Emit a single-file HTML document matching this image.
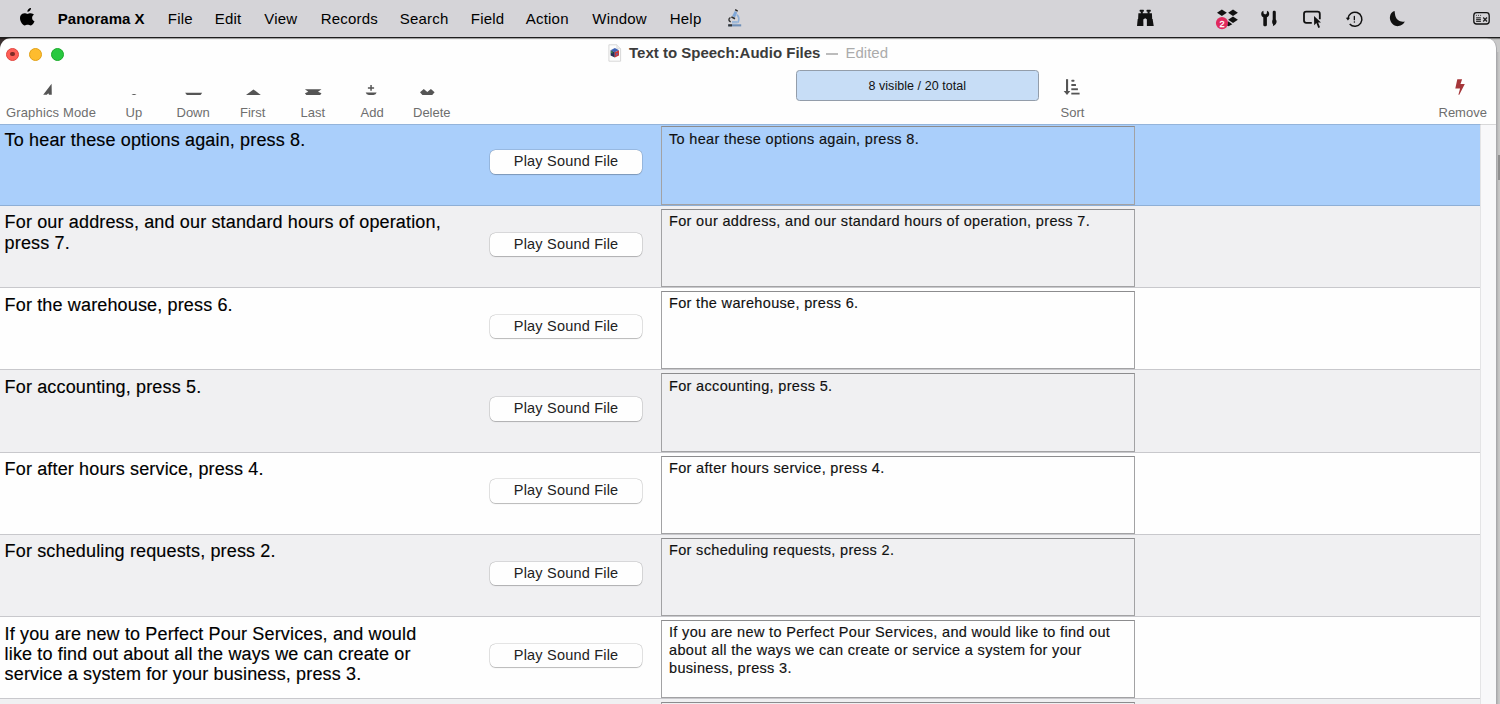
<!DOCTYPE html>
<html><head><meta charset="utf-8"><style>
*{margin:0;padding:0;box-sizing:border-box}
html,body{width:1500px;height:704px;overflow:hidden;background:linear-gradient(90deg,#b0b0b2 1497px,#bdbdbd 1498px,#c8c8c8 1499px);font-family:"Liberation Sans", sans-serif}
.t{position:absolute;white-space:nowrap}
#menubar{position:absolute;left:0;top:0;width:1500px;height:38px;background:#d5d4d8;border-bottom:1.5px solid #1e1e1e}
#win{position:absolute;left:0;top:38px;width:1496.5px;height:700px;background:#fefefe;border-top-left-radius:11px;border-top-right-radius:10px;border-right:1px solid #a9a9ac}
.tl{position:absolute;width:13px;height:13px;border-radius:50%;border:0.5px solid}
#status{position:absolute;left:795.5px;top:69.8px;width:243.5px;height:31.2px;background:#c7ddf6;border:1px solid #939daa;border-radius:3.5px;
  font-size:12.5px;line-height:29.2px;padding-top:1.2px;text-align:center;color:#111;letter-spacing:0.05px}
.row{position:absolute;left:0;width:1480px;border-top:1px solid #c8c8cc}
.row.sel{background:#aacffb;border-top:none;border-bottom:1px solid #8eafd6}
.row.g{background:#f0f0f2;border-top-color:#8eafd6}
.row.g~.row.g{border-top-color:#c8c8cc}
.row.w{background:#fefefe}
.box{position:absolute;left:661px;width:474px;border:1px solid #a2a2a4;border-top-color:#8c8c8e}
.btn{position:absolute;left:489.8px;width:152.6px;height:23.5px;background:#fefefe;border-radius:5.5px;
  box-shadow:0 0 0 0.6px rgba(0,0,0,0.17),0 0.8px 1px rgba(0,0,0,0.2);font-size:14.5px;line-height:22px;text-align:center;color:#222;letter-spacing:0.2px}
#sb{position:absolute;left:1480px;top:124px;width:16px;height:580px;background:#f8f8fa;border-left:1px solid #e4e4e6}
#tbline{position:absolute;left:0;top:123.5px;width:1496px;height:1px;background:rgba(0,0,0,0.13)}
</style></head>
<body>
<div id="menubar"></div>
<svg style="position:absolute;left:19.6px;top:8.4px" width="16.2" height="17.8" viewBox="0 0 170 200" preserveAspectRatio="none">
<path fill="#000" d="M150.4 155.6c-2.8 6.4-6.1 12.4-9.9 17.8-5.2 7.4-9.5 12.6-12.7 15.4-5.1 4.7-10.5 7.1-16.3 7.2-4.2 0-9.2-1.2-15-3.6-5.8-2.4-11.2-3.5-16.1-3.5-5.1 0-10.6 1.2-16.5 3.5-5.9 2.4-10.7 3.6-14.3 3.7-5.5.2-11-2.2-16.5-7.3-3.5-3.1-7.9-8.4-13.2-15.9-5.7-8-10.3-17.2-14-27.7C1.9 134.9 0 123.9 0 113.3c0-12.2 2.6-22.6 7.9-31.4 4.1-7 9.6-12.6 16.5-16.7 6.9-4.1 14.3-6.2 22.3-6.3 4.4 0 10.1 1.4 17.2 4 7.1 2.7 11.6 4 13.6 4 1.5 0 6.5-1.6 15.1-4.7 8.1-2.9 14.9-4.1 20.5-3.6 15.2 1.2 26.6 7.2 34.2 18-13.6 8.2-20.3 19.8-20.2 34.6.1 11.5 4.3 21.1 12.5 28.7 3.7 3.5 7.9 6.2 12.5 8.2-1 2.9-2.1 5.7-3.2 8.4zM115.5 3.6c0 9.1-3.3 17.5-9.9 25.3-8 9.3-17.6 14.7-28.1 13.9-.1-1.1-.2-2.2-.2-3.4 0-8.7 3.8-18 10.5-25.6 3.4-3.8 7.6-7 12.7-9.6C105.6 1.7 110.4.3 114.9 0c.1 1.2.6 2.4.6 3.6z"/></svg>
<div class="t" style="left:57.8px;top:9.83px;font-size:15px;line-height:18.75px;font-weight:700;color:#000;letter-spacing:0px;">Panorama X</div>
<div class="t" style="left:167.8px;top:9.83px;font-size:15px;line-height:18.75px;font-weight:400;color:#000;letter-spacing:0.2px;">File</div>
<div class="t" style="left:214.8px;top:9.83px;font-size:15px;line-height:18.75px;font-weight:400;color:#000;letter-spacing:0.2px;">Edit</div>
<div class="t" style="left:264.3px;top:9.83px;font-size:15px;line-height:18.75px;font-weight:400;color:#000;letter-spacing:0.2px;">View</div>
<div class="t" style="left:320.8px;top:9.83px;font-size:15px;line-height:18.75px;font-weight:400;color:#000;letter-spacing:0.2px;">Records</div>
<div class="t" style="left:399.8px;top:9.83px;font-size:15px;line-height:18.75px;font-weight:400;color:#000;letter-spacing:0.2px;">Search</div>
<div class="t" style="left:470.8px;top:9.83px;font-size:15px;line-height:18.75px;font-weight:400;color:#000;letter-spacing:0.2px;">Field</div>
<div class="t" style="left:525.8px;top:9.83px;font-size:15px;line-height:18.75px;font-weight:400;color:#000;letter-spacing:0.2px;">Action</div>
<div class="t" style="left:592.3px;top:9.83px;font-size:15px;line-height:18.75px;font-weight:400;color:#000;letter-spacing:0.2px;">Window</div>
<div class="t" style="left:669.8px;top:9.83px;font-size:15px;line-height:18.75px;font-weight:400;color:#000;letter-spacing:0.2px;">Help</div>
<svg style="position:absolute;left:0;top:0" width="1500" height="37" viewBox="0 0 1500 37">
<g fill="#111">
<rect x="1139.6" y="9.7" width="4.3" height="2" rx="0.6"/><rect x="1146.5" y="9.7" width="4.3" height="2" rx="0.6"/>
<rect x="1140.8" y="11.2" width="2" height="2.6"/><rect x="1147.6" y="11.2" width="2" height="2.6"/>
<path d="M1138.4 13.3 H1151.9 L1152.2 19.2 H1146.8 L1145.2 18.2 L1143.6 19.2 H1138.1Z"/>
<path d="M1137.7 18.9 H1143.3 L1143.4 25.9 H1137Z"/><path d="M1146.9 18.9 H1152.6 L1153.7 25.9 H1146.9Z"/>
</g>
<g fill="#111">
<path d="M1217 12.8 L1221.9 9.6 L1226.8 12.8 L1221.9 16Z"/>
<path d="M1228.1 12.8 L1233 9.6 L1237.9 12.8 L1233 16Z"/>
<path d="M1228.1 19.8 L1233 16.6 L1237.9 19.8 L1233 23Z"/>
<path d="M1226 22.5 L1228.5 21.6 L1232.3 24.2 L1228.5 26.2 L1226 25Z"/>
</g>
<circle cx="1222" cy="23.1" r="6.1" fill="#e02a5e"/>
<text x="1222.1" y="26.5" font-family="Liberation Sans" font-size="9.2" font-weight="400" fill="#fff" stroke="#fff" stroke-width="0.3" text-anchor="middle">2</text>
<g fill="#111">
<path d="M1261.2 14 C1261.2 12.3 1262.2 11.1 1263.4 10.8 L1263.6 13.6 L1265.2 14.4 L1266.8 13.6 L1267 10.8 C1268.2 11.1 1269.2 12.3 1269.2 14 C1269.2 15.6 1268.3 16.8 1266.9 17.3 V25 C1266.9 25.9 1266.1 26.2 1265.1 26.2 C1264.1 26.2 1263.3 25.9 1263.3 25 V17.3 C1261.9 16.8 1261.2 15.6 1261.2 14Z"/>
<path d="M1272.7 12.3 C1272.7 11.2 1273.4 10.8 1274.25 10.8 C1275.1 10.8 1275.8 11.2 1275.8 12.3 V19.6 C1276.6 20.4 1276.8 21.6 1276.4 22.8 C1276 24.3 1274.6 25.6 1272.8 26.2 C1273.4 25.3 1273.2 24.6 1272.6 23.8 C1272 22.8 1272 20.6 1272.7 19.6Z"/>
</g>
<path d="M1311.8 22.85 H1306.2 C1304.9 22.85 1304 22 1304 20.6 V14 C1304 12.6 1304.9 11.7 1306.2 11.7 H1317.6 C1318.9 11.7 1319.8 12.6 1319.8 14 V19.2" fill="none" stroke="#111" stroke-width="1.8"/>
<path d="M1314 16 L1314.2 25.2 L1316.4 23.1 L1318.3 27.9 L1320 27.2 L1318.1 22.6 L1321 22.4 Z" fill="#111"/>
<path d="M1347.9 18.6 A7 7 0 1 1 1349.7 23.9" fill="none" stroke="#111" stroke-width="1.5"/>
<path d="M1345.8 17.8 H1350.1 L1347.9 20.6Z" fill="#111"/>
<rect x="1353.7" y="15.8" width="1.3" height="4.5" rx="0.6" fill="#111"/><circle cx="1354.35" cy="22" r="0.75" fill="#111"/>
<path d="M1394.6 11 C1390.2 12.2 1389.4 17 1390.2 20 C1391.2 24 1394.8 26.4 1398.4 26.1 C1401.4 25.9 1403.8 23.8 1404.8 21.5 C1400.3 22.6 1396.4 20 1395.3 15.8 C1394.9 14.2 1394.8 12.5 1394.6 11Z" fill="#111"/>
<rect x="1473.8" y="12.7" width="15.4" height="11.3" rx="2.8" fill="none" stroke="#111" stroke-width="1.3"/>
<g fill="#222"><circle cx="1476.4" cy="15.3" r="0.55"/><circle cx="1478.5" cy="15.3" r="0.55"/><circle cx="1480.6" cy="15.3" r="0.55"/>
<rect x="1476.1" y="17.3" width="4.8" height="1.1"/><rect x="1476.1" y="19.1" width="4.8" height="1.1"/><rect x="1476.1" y="20.8" width="4.8" height="1.1"/></g>
<path d="M1483.2 17.5 L1487 21.5 M1487 17.5 L1483.2 21.5" stroke="#222" stroke-width="1.25"/>
<g>
<path d="M735.5 9 L738 10.5 L737.3 11.8 L734.8 10.3Z" fill="#222"/>
<path d="M734.8 11 L737.2 12.4 L735 17.5 L732.2 16Z" fill="#7ea6d8"/>
<path d="M731.8 16.2 L735.4 18 L734.6 19.4 L731 17.6Z" fill="#2c2c2c"/>
<path d="M730 17 C727.5 18.5 727.8 21.5 730.5 22.5 L731 21.3 C729.3 20.6 729.2 18.9 730.8 18Z" fill="#333"/>
<path d="M737 14 C740 15.5 740.5 20 738.5 23 L737 22.5 C738.6 20 738.3 17 736.4 15.5Z" fill="#8fb0d8"/>
<rect x="732" y="21" width="5.5" height="2.5" fill="#9db8d8"/>
<path d="M728.2 24.3 H741.2 V26.4 H728.2Z" fill="#6e8fb8"/>
<path d="M728.2 24.3 H732 V26.4 H728.2Z" fill="#333"/>
</g>
</svg>
<div style="position:absolute;left:0;top:38px;width:14px;height:14px;background:#3a3030"></div><div style="position:absolute;left:1482px;top:38px;width:18px;height:14px;background:#c9c9c9"></div>
<div id="win"></div>
<div style="position:absolute;left:0;top:38px;width:1500px;height:1px;background:rgba(0,0,0,0.36)"></div><div style="position:absolute;left:0;top:39px;width:1500px;height:1px;background:rgba(0,0,0,0.05)"></div>
<div class="tl" style="left:6px;top:47.5px;background:#fe5f57;border-color:#e2463f"></div>
<div style="position:absolute;left:10.25px;top:51.75px;width:4.5px;height:4.5px;border-radius:50%;background:#7e2a25"></div>
<div class="tl" style="left:28.5px;top:47.5px;background:#febc2e;border-color:#e1a116"></div>
<div class="tl" style="left:51px;top:47.5px;background:#28c840;border-color:#1aab29"></div>
<svg style="position:absolute;left:600px;top:40px" width="30" height="26" viewBox="600 40 30 26">
<path d="M608.9 44.8 H616.8 L620.6 48.6 V61.2 H608.9Z" fill="#fdfdfd" stroke="#d2d2d2" stroke-width="0.9"/>
<path d="M616.8 44.8 V48.6 H620.6" fill="#eee" stroke="#d8d8d8" stroke-width="0.7"/>
<path d="M610.6 50.2 L614.8 48.1 L619 50.2 L614.8 52.3Z" fill="#3f63b5"/>
<path d="M610.6 50.2 L614.8 52.3 V57.6 L610.6 55.5Z" fill="#2b3158"/>
<path d="M614.8 52.3 L619 50.2 V55.5 L614.8 57.6Z" fill="#c93a3a"/>
<path d="M611 51 L612.5 51.7 V53.5 L611 52.8Z" fill="#3c9a4a"/>
<path d="M616.2 53.6 L617.6 52.9 V54.7 L616.2 55.4Z" fill="#4a6fd0"/>
</svg>
<div class="t" style="left:629px;top:43.93px;font-size:15px;line-height:18.75px;font-weight:700;color:#3b3b3b;letter-spacing:0px;">Text to Speech:Audio Files</div>
<div style="position:absolute;left:826px;top:53px;width:12.4px;height:2px;background:#bcbcbc"></div>
<div class="t" style="left:845.5px;top:43.93px;font-size:15px;line-height:18.75px;font-weight:400;color:#ababab;letter-spacing:0px;">Edited</div>
<div class="t" style="left:6px;top:105.17px;font-size:13px;line-height:16.25px;font-weight:400;color:#6e6e6e;letter-spacing:0.15px;">Graphics Mode</div>
<div class="t" style="left:125.5px;top:105.17px;font-size:13px;line-height:16.25px;font-weight:400;color:#6e6e6e;letter-spacing:0px;">Up</div>
<div class="t" style="left:176.5px;top:105.17px;font-size:13px;line-height:16.25px;font-weight:400;color:#6e6e6e;letter-spacing:0px;">Down</div>
<div class="t" style="left:240px;top:105.17px;font-size:13px;line-height:16.25px;font-weight:400;color:#6e6e6e;letter-spacing:0px;">First</div>
<div class="t" style="left:300.5px;top:105.17px;font-size:13px;line-height:16.25px;font-weight:400;color:#6e6e6e;letter-spacing:0px;">Last</div>
<div class="t" style="left:360.5px;top:105.17px;font-size:13px;line-height:16.25px;font-weight:400;color:#6e6e6e;letter-spacing:0px;">Add</div>
<div class="t" style="left:413px;top:105.17px;font-size:13px;line-height:16.25px;font-weight:400;color:#6e6e6e;letter-spacing:0px;">Delete</div>
<div class="t" style="left:1060.5px;top:105.17px;font-size:13px;line-height:16.25px;font-weight:400;color:#6e6e6e;letter-spacing:0px;">Sort</div>
<div class="t" style="left:1438.5px;top:105.17px;font-size:13px;line-height:16.25px;font-weight:400;color:#6e6e6e;letter-spacing:0px;">Remove</div>
<svg style="position:absolute;left:0;top:70px" width="1500" height="30" viewBox="0 70 1500 30">
<path fill="#555" d="M43.2 94.8 L51.6 83.8 L51.8 94.8 L49 94.8 L48.3 93.2 L46.8 94.8Z"/>
<path fill="#555" d="M131.5 95 Q134 92.8 136.5 95Z"/>
<path fill="#555" d="M185.1 92.8 H202.2 L200.6 94.9 H186.8Z"/>
<path fill="#555" d="M246 94.9 L253.4 89.4 L260.8 94.9Z"/>
<path fill="#555" d="M304.9 89.2 H321.5 L318 91.8 L321.5 93.3 L320.2 94.9 H306.3 L304.9 93.3 L308.3 91.8Z"/>
<path fill="#555" d="M370.3 84.9 h1.5 v2.3 h2.3 v1.5 h-2.3 v2.1 h-1.5 v-2.1 h-2.4 v-1.5 h2.4z"/>
<path fill="#555" d="M365.7 92.5 H376.6 Q376 94.6 373.5 95 H368.8 Q366.3 94.6 365.7 92.5Z"/>
<path fill="#555" d="M420 92.3 L423.8 89 L427.3 92 L430.9 89 L434.6 92.3 L432.2 95 H422.4Z"/>
<rect x="1066" y="79.2" width="2.1" height="13" fill="#555"/>
<path fill="#555" d="M1063.7 91.1 H1070.3 L1067 94.9Z"/>
<rect x="1071.3" y="79.8" width="3.2" height="2" rx="0.8" fill="#555"/>
<rect x="1071.3" y="84" width="4.7" height="2" rx="0.5" fill="#555"/>
<rect x="1071.3" y="88.3" width="6.6" height="1.9" fill="#555"/>
<rect x="1071.3" y="92.7" width="8.3" height="1.8" fill="#555"/>
<path fill="#a5363a" d="M1457.3 79.2 H1462.1 L1460.5 84.1 H1464.8 L1459.3 94.8 H1458.4 L1460.1 88.4 H1455.3Z"/>
</svg>
<div id="status">8 visible / 20 total</div>
<div class="row sel" style="top:124px;height:82px"></div>
<div class="box" style="top:126px;height:79px"></div>
<div class="t" style="left:4.6px;top:130.24px;font-size:18px;line-height:20.25px;font-weight:400;color:#000;letter-spacing:0.15px;-webkit-text-stroke:0.15px #000;">To hear these options again, press 8.</div>
<div class="t" style="left:669px;top:130.88px;font-size:14.5px;line-height:17.8px;font-weight:400;color:#111;letter-spacing:0.33px;-webkit-text-stroke:0.15px #111;">To hear these options again, press 8.</div>
<div class="btn" style="top:150.30px">Play Sound File</div>
<div class="row g" style="top:205px;height:83px"></div>
<div class="box" style="top:209px;height:78px"></div>
<div class="t" style="left:4.6px;top:212.49px;font-size:18px;line-height:20.25px;font-weight:400;color:#000;letter-spacing:0.15px;-webkit-text-stroke:0.15px #000;">For our address, and our standard hours of operation,<br>press 7.</div>
<div class="t" style="left:669px;top:213.13px;font-size:14.5px;line-height:17.8px;font-weight:400;color:#111;letter-spacing:0.33px;-webkit-text-stroke:0.15px #111;">For our address, and our standard hours of operation, press 7.</div>
<div class="btn" style="top:232.55px">Play Sound File</div>
<div class="row w" style="top:287px;height:83px"></div>
<div class="box" style="top:291px;height:78px"></div>
<div class="t" style="left:4.6px;top:294.74px;font-size:18px;line-height:20.25px;font-weight:400;color:#000;letter-spacing:0.15px;-webkit-text-stroke:0.15px #000;">For the warehouse, press 6.</div>
<div class="t" style="left:669px;top:295.38px;font-size:14.5px;line-height:17.8px;font-weight:400;color:#111;letter-spacing:0.33px;-webkit-text-stroke:0.15px #111;">For the warehouse, press 6.</div>
<div class="btn" style="top:314.80px">Play Sound File</div>
<div class="row g" style="top:369px;height:84px"></div>
<div class="box" style="top:373px;height:79px"></div>
<div class="t" style="left:4.6px;top:376.99px;font-size:18px;line-height:20.25px;font-weight:400;color:#000;letter-spacing:0.15px;-webkit-text-stroke:0.15px #000;">For accounting, press 5.</div>
<div class="t" style="left:669px;top:377.63px;font-size:14.5px;line-height:17.8px;font-weight:400;color:#111;letter-spacing:0.33px;-webkit-text-stroke:0.15px #111;">For accounting, press 5.</div>
<div class="btn" style="top:397.05px">Play Sound File</div>
<div class="row w" style="top:452px;height:83px"></div>
<div class="box" style="top:456px;height:78px"></div>
<div class="t" style="left:4.6px;top:459.24px;font-size:18px;line-height:20.25px;font-weight:400;color:#000;letter-spacing:0.15px;-webkit-text-stroke:0.15px #000;">For after hours service, press 4.</div>
<div class="t" style="left:669px;top:459.88px;font-size:14.5px;line-height:17.8px;font-weight:400;color:#111;letter-spacing:0.33px;-webkit-text-stroke:0.15px #111;">For after hours service, press 4.</div>
<div class="btn" style="top:479.30px">Play Sound File</div>
<div class="row g" style="top:534px;height:83px"></div>
<div class="box" style="top:538px;height:78px"></div>
<div class="t" style="left:4.6px;top:541.49px;font-size:18px;line-height:20.25px;font-weight:400;color:#000;letter-spacing:0.15px;-webkit-text-stroke:0.15px #000;">For scheduling requests, press 2.</div>
<div class="t" style="left:669px;top:542.13px;font-size:14.5px;line-height:17.8px;font-weight:400;color:#111;letter-spacing:0.33px;-webkit-text-stroke:0.15px #111;">For scheduling requests, press 2.</div>
<div class="btn" style="top:561.55px">Play Sound File</div>
<div class="row w" style="top:616px;height:83px"></div>
<div class="box" style="top:620px;height:78px"></div>
<div class="t" style="left:4.6px;top:623.74px;font-size:18px;line-height:20.25px;font-weight:400;color:#000;letter-spacing:0.15px;-webkit-text-stroke:0.15px #000;">If you are new to Perfect Pour Services, and would<br>like to find out about all the ways we can create or<br>service a system for your business, press 3.</div>
<div class="t" style="left:669px;top:624.38px;font-size:14.5px;line-height:17.8px;font-weight:400;color:#111;letter-spacing:0.33px;-webkit-text-stroke:0.15px #111;">If you are new to Perfect Pour Services, and would like to find out<br>about all the ways we can create or service a system for your<br>business, press 3.</div>
<div class="btn" style="top:643.80px">Play Sound File</div>
<div class="row g" style="top:698px;height:83px"></div>
<div class="box" style="top:702px;height:78px"></div>
<div id="sb"></div>
<div style="position:absolute;left:1497.5px;top:155px;width:3px;height:25px;background:#8f8f90"></div>
<div id="tbline"></div>
</body></html>
